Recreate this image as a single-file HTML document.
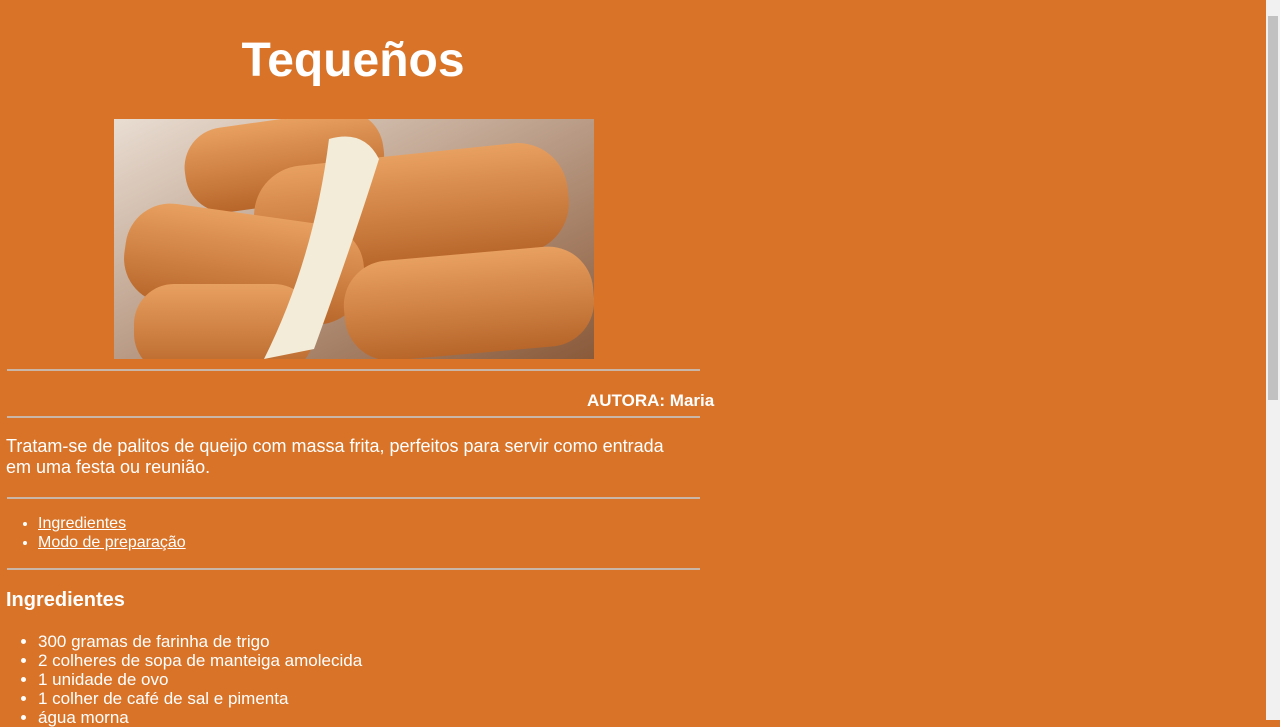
<!DOCTYPE html>
<html><head><meta charset="utf-8"><style>
html,body{margin:0;padding:0;width:1280px;height:720px;overflow:hidden;background:#d87328;font-family:"Liberation Sans",Arial,sans-serif;color:#fff}
.a{position:absolute;white-space:nowrap}
hr{position:absolute;left:7px;width:693px;margin:0;border:0;border-top:2px solid #c9b6a8;height:0}
ul{margin:0;padding:0 0 0 38px;position:absolute;left:0}
li{line-height:19px}
a{color:#fff}
.sb{position:absolute;right:0;top:0;width:14px;height:720px;background:#f1f1f1}
.th{position:absolute;right:2px;top:16px;width:10px;height:384px;background:#c1c1c1}
</style></head><body>
<div class="a" style="left:0;width:706px;text-align:center;top:33px;font-size:48px;font-weight:bold">Tequeños</div>
<svg class="a" style="left:114px;top:119px" width="480" height="240" viewBox="0 0 480 240">
<defs>
<linearGradient id="g" x1="0" y1="0" x2="0" y2="1"><stop offset="0" stop-color="#e8a060"/><stop offset="1" stop-color="#b8662a"/></linearGradient>
<linearGradient id="bg" x1="0" y1="0" x2="1" y2="1"><stop offset="0" stop-color="#e9ddd2"/><stop offset="1" stop-color="#8a5a3a"/></linearGradient>
</defs>
<rect width="480" height="240" fill="url(#bg)"/>
<g fill="url(#g)">
<rect x="70" y="0" width="200" height="85" rx="40" transform="rotate(-8 170 40)"/>
<rect x="140" y="35" width="315" height="110" rx="50" transform="rotate(-6 300 90)"/>
<rect x="10" y="95" width="240" height="100" rx="45" transform="rotate(8 130 145)"/>
<rect x="230" y="135" width="250" height="100" rx="45" transform="rotate(-5 350 185)"/>
<rect x="20" y="165" width="180" height="90" rx="40"/>
</g>
<path d="M215 20 Q250 10 265 40 Q240 120 200 230 L150 240 Q200 140 215 20Z" fill="#f2ecd8"/>
</svg>
<hr style="top:369px">
<div class="a" style="left:587px;top:391px;font-size:17px;font-weight:bold">AUTORA: Maria</div>
<hr style="top:416px">
<div class="a" style="left:6px;top:436px;font-size:18px;line-height:21px;white-space:normal;width:680px">Tratam-se de palitos de queijo com massa frita, perfeitos para servir como entrada em uma festa ou reunião.</div>
<hr style="top:497px">
<ul style="top:514px;font-size:16px"><li><a href="#i">Ingredientes</a></li><li><a href="#m">Modo de preparação</a></li></ul>
<hr style="top:568px">
<div class="a" style="left:6px;top:589px;font-size:20px;font-weight:bold">Ingredientes</div>
<ul style="top:632px;font-size:17px"><li>300 gramas de farinha de trigo</li><li>2 colheres de sopa de manteiga amolecida</li><li>1 unidade de ovo</li><li>1 colher de café de sal e pimenta</li><li>água morna</li></ul>
<div class="sb"><div class="th"></div></div>
</body></html>
